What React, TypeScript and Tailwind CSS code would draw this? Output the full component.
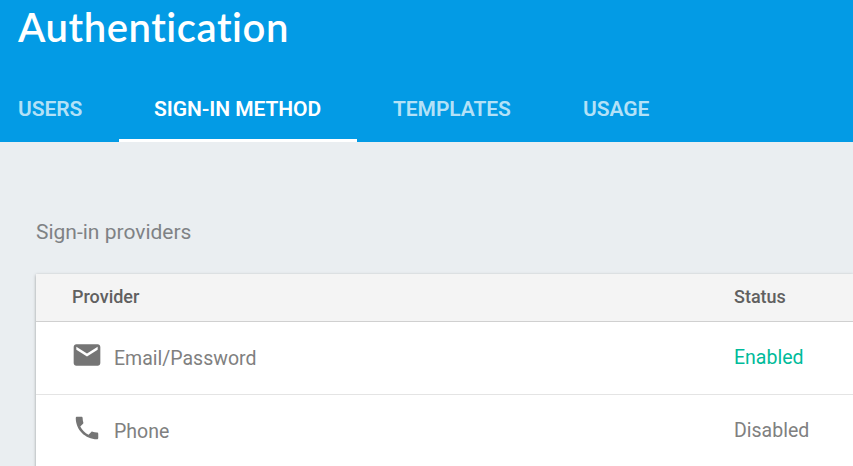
import React from 'react';

const tabs = [
  { label: 'USERS', box: 'pl-[18px] w-[119px]', active: false },
  { label: 'SIGN-IN METHOD', box: 'pl-[35px] w-[238px]', active: true },
  { label: 'TEMPLATES', box: 'pl-9 w-[190px]', active: false },
  { label: 'USAGE', box: 'pl-9 w-[138px]', active: false },
];

function Mail() {
  return (
    <svg className="block h-8 w-8" viewBox="0 0 24 24" fill="#757575">
      <path d="M20 4H4c-1.1 0-1.99.9-1.99 2L2 18c0 1.1.9 2 2 2h16c1.1 0 2-.9 2-2V6c0-1.1-.9-2-2-2zm0 4.1l-8 5-8-5V5.9l8 5 8-5v2.2z" />
    </svg>
  );
}

function Phone() {
  return (
    <svg className="block h-8 w-8 p-px" viewBox="0 0 24 24" fill="#757575">
      <path d="M6.62 10.79c1.44 2.83 3.76 5.14 6.59 6.59l2.2-2.2c.27-.27.67-.36 1.02-.24 1.12.37 2.33.57 3.57.57.55 0 1 .45 1 1V20c0 .55-.45 1-1 1-9.39 0-17-7.61-17-17 0-.55.45-1 1-1h3.5c.55 0 1 .45 1 1 0 1.25.2 2.45.57 3.57.11.35.03.74-.25 1.02l-2.2 2.2z" />
    </svg>
  );
}

export default function App() {
  return (
    <div className="flex h-[466px] w-full flex-col overflow-hidden bg-[#eaeef1] font-[Roboto,sans-serif]">
      <header className="flex h-[142px] shrink-0 flex-col bg-[#039be5] text-white">
        <h1 className="h-[76px] pl-[18px] pt-[3px] font-[Lato,sans-serif] text-[40px] leading-[48px] font-semibold tracking-[0.55px] whitespace-nowrap [font-variant-ligatures:none]">
          Authentication
        </h1>
        <nav className="flex flex-1">
          {tabs.map((t) => (
            <div
              key={t.label}
              className={`shrink-0 whitespace-nowrap border-b-[3px] pt-[17px] text-[21px] leading-8 font-semibold tracking-[-0.08px] ${t.box} ${
                t.active ? 'border-white text-white' : 'border-transparent text-[#b3e1f7]'
              }`}
            >
              {t.label}
            </div>
          ))}
        </nav>
      </header>
      <main className="flex flex-1 flex-col pl-9">
        <h2 className="h-[132px] pt-[74px] text-[21px] leading-8 text-[#7f8285]">Sign-in providers</h2>
        <section className="flex-1 bg-white shadow-[0_1px_3px_rgba(0,0,0,0.35)]">
          <div className="flex h-12 border-b border-[#d0d0d0] bg-[#f4f4f4] pl-9 text-[18px] leading-[46px] font-medium text-[#606060]">
            <div className="w-[662px]">Provider</div>
            <div>Status</div>
          </div>
          <div className="flex h-[73px] items-center border-b border-[#e4e4e4] pl-[35px] text-[19.5px] text-[#808080]">
            <div className="flex w-[663px] items-center gap-[11px]">
              <div className="mb-[6px]"><Mail /></div>
              <span className="pt-[2px]">Email/Password</span>
            </div>
            <div className="text-[#00bb9a]">Enabled</div>
          </div>
          <div className="flex h-[73px] items-center pl-[35px] text-[19.5px] text-[#808080]">
            <div className="flex w-[663px] items-center gap-[11px]">
              <div className="mb-[7px]"><Phone /></div>
              <span>Phone</span>
            </div>
            <div className="pb-[2px]">Disabled</div>
          </div>
        </section>
      </main>
    </div>
  );
}
